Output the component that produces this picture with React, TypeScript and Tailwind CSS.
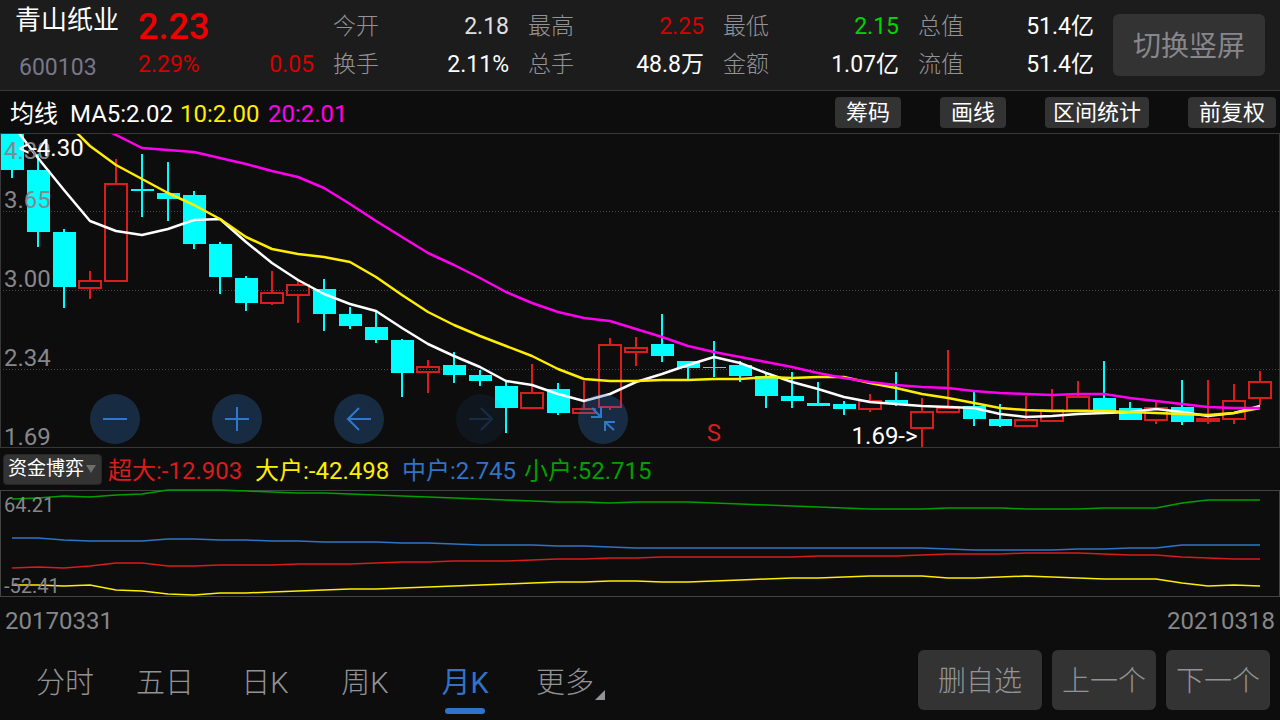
import React, { useState } from 'react';
import clsx from 'clsx';

type Candle = [dir: 'up' | 'down', high: number, top: number, bottom: number, low: number];

interface Quote {
  label: string;
  value: string;
  color: string;
}

const quoteColumns: Quote[][] = [
  [
    { label: '今开', value: '2.18', color: 'text-[#e0e0e0]' },
    { label: '换手', value: '2.11%', color: 'text-white' },
  ],
  [
    { label: '最高', value: '2.25', color: 'text-[#d60000]' },
    { label: '总手', value: '48.8万', color: 'text-white' },
  ],
  [
    { label: '最低', value: '2.15', color: 'text-[#00d400]' },
    { label: '金额', value: '1.07亿', color: 'text-white' },
  ],
  [
    { label: '总值', value: '51.4亿', color: 'text-white' },
    { label: '流值', value: '51.4亿', color: 'text-white' },
  ],
];

const candles: Candle[] = [
  ['down', 133, 134, 170, 178],
  ['down', 154, 170, 232, 247],
  ['down', 229, 232, 287, 308],
  ['up', 271, 280, 289, 299],
  ['up', 159, 183, 282, 282],
  ['down', 154, 189, 191, 217],
  ['down', 162, 193, 199, 221],
  ['down', 191, 195, 244, 249],
  ['down', 242, 244, 277, 294],
  ['down', 276, 278, 303, 311],
  ['up', 271, 292, 304, 305],
  ['up', 281, 284, 296, 323],
  ['down', 279, 289, 314, 331],
  ['down', 307, 314, 326, 329],
  ['down', 311, 327, 340, 343],
  ['down', 339, 340, 373, 397],
  ['up', 360, 366, 373, 393],
  ['down', 352, 365, 375, 383],
  ['down', 370, 375, 381, 386],
  ['down', 382, 386, 408, 433],
  ['up', 364, 392, 409, 409],
  ['down', 383, 389, 413, 415],
  ['up', 381, 408, 414, 414],
  ['up', 338, 344, 408, 410],
  ['up', 337, 347, 353, 366],
  ['down', 314, 344, 356, 362],
  ['down', 361, 361, 368, 379],
  ['down', 341, 367, 368, 377],
  ['down', 361, 365, 376, 382],
  ['down', 374, 376, 396, 408],
  ['down', 372, 396, 401, 408],
  ['down', 382, 403, 406, 406],
  ['down', 401, 404, 409, 415],
  ['up', 394, 400, 410, 412],
  ['down', 372, 400, 404, 406],
  ['up', 398, 411, 429, 447],
  ['up', 350, 407, 413, 413],
  ['down', 391, 406, 419, 426],
  ['down', 404, 419, 426, 427],
  ['up', 396, 419, 427, 427],
  ['up', 389, 409, 422, 422],
  ['up', 381, 396, 411, 411],
  ['down', 361, 398, 411, 411],
  ['down', 402, 408, 420, 420],
  ['up', 402, 407, 421, 424],
  ['down', 380, 407, 422, 425],
  ['up', 380, 418, 422, 424],
  ['up', 384, 400, 420, 424],
  ['up', 371, 381, 399, 405],
];

const ma5 = [
  124, 158, 190, 221, 231, 235, 229, 220, 219, 242, 263, 280, 294, 304, 311, 328, 344, 356, 367, 381, 385, 394, 401,
  394, 382, 374, 365, 357, 363, 373, 382, 389, 397, 402, 404, 406, 407, 408, 414, 417, 416, 414, 413, 412, 409, 412,
  416, 413, 406,
];
const ma10 = [
  70, 95, 120, 146, 165, 179, 193, 205, 219, 237, 249, 254, 257, 262, 277, 295, 312, 325, 336, 346, 356, 369, 379,
  381, 381, 380, 380, 379, 379, 377, 378, 377, 377, 383, 388, 394, 398, 403, 408, 410, 411, 411, 411, 412, 413, 414,
  415, 413, 408,
];
const ma20 = [
  83, 96, 109, 122, 135, 148, 150, 152, 158, 164, 171, 177, 188, 204, 221, 237, 253, 265, 278, 292, 303, 312, 318,
  321, 329, 337, 346, 352, 357, 362, 367, 373, 378, 382, 385, 387, 388, 391, 393, 394, 395, 394, 394, 398, 401, 404,
  407, 408, 408,
];

const small = [
  499, 498, 496, 497, 495, 494, 490, 490, 490, 491, 492, 493, 493, 494, 495, 496, 497, 498, 499, 500, 501, 502, 502,
  503, 502, 502, 502, 503, 504, 505, 506, 507, 508, 509, 509, 509, 508, 508, 508, 509, 509, 509, 508, 508, 508, 503,
  500, 500, 500,
];
const middle = [
  538, 538, 540, 541, 541, 541, 539, 539, 540, 540, 541, 541, 542, 542, 542, 543, 543, 544, 545, 545, 545, 546, 546,
  547, 548, 548, 548, 548, 548, 548, 548, 548, 548, 548, 548, 548, 549, 550, 550, 550, 550, 549, 549, 548, 548, 545,
  545, 545, 545,
];
const huge = [
  568, 567, 568, 566, 563, 563, 566, 566, 565, 565, 565, 564, 564, 564, 563, 562, 562, 561, 561, 561, 560, 559, 559,
  558, 558, 557, 557, 557, 557, 557, 557, 556, 556, 556, 556, 555, 554, 554, 554, 553, 553, 553, 554, 555, 555, 557,
  558, 559, 559,
];
const large = [
  585, 585, 586, 585, 590, 591, 594, 595, 593, 593, 592, 591, 590, 589, 589, 588, 587, 586, 585, 584, 583, 582, 582,
  581, 581, 582, 582, 581, 580, 579, 578, 578, 577, 576, 576, 576, 578, 578, 577, 576, 577, 578, 579, 579, 579, 583,
  586, 585, 586,
];

const tabs = ['分时', '五日', '日K', '周K', '月K', '更多'];

const xOf = (index: number) => 12 + index * 26;
const toPoints = (values: number[]) => values.map((y, i) => `${xOf(i)},${y}`).join(' ');

const Header = () => (
  <header className="flex h-[91px] items-start gap-[19px] border-b border-[#383838] bg-[#1c1c1c] pr-[15px] pl-[15px]">
    <div className="flex w-[104px] shrink-0 flex-col gap-[18px] pt-[5px]">
      <h1 className="text-[26px] leading-[30px] whitespace-nowrap text-white">青山纸业</h1>
      <span className="pl-1 text-[23px] leading-[30px] text-[#77778a]">600103</span>
    </div>
    <div className="flex-1 pt-2 text-[23px] leading-[38px] text-[#d60000]">
      <p className="text-[36px] leading-[38px] font-medium text-[#f00000]">2.23</p>
      <p className="flex justify-between">
        <span>2.29%</span>
        <span>0.05</span>
      </p>
    </div>
    {quoteColumns.map((column, i) => (
      <dl key={i} className="flex-1 pt-2 text-[23px] leading-[38px] whitespace-nowrap">
        {column.map(({ label, value, color }) => (
          <div key={label} className="flex justify-between">
            <dt className="font-light text-[#939397]">{label}</dt>
            <dd className={color}>{value}</dd>
          </div>
        ))}
      </dl>
    ))}
    <button className="mt-[14px] h-[62px] w-[152px] shrink-0 rounded-md bg-[#333] pt-1 text-[28px] text-[#87878b]">
      切换竖屏
    </button>
  </header>
);

const Averages = () => (
  <div className="flex h-[42px] items-center justify-between pr-1 pl-[10px]">
    <div className="flex pt-[3px] text-2xl whitespace-nowrap">
      <span className="w-[60px] text-white">均线</span>
      <span className="w-[110px] text-white">MA5:2.02</span>
      <span className="w-[88px] text-[#ffee00]">10:2.00</span>
      <span className="text-[#ff00ee]">20:2.01</span>
    </div>
    <div className="flex gap-[39px] text-[22px] whitespace-nowrap text-white">
      <button className="h-[31px] rounded-[4px] bg-[#333] px-[11px] leading-[31px]">筹码</button>
      <button className="h-[31px] rounded-[4px] bg-[#333] px-[11px] leading-[31px]">画线</button>
      <button className="h-[31px] rounded-[4px] bg-[#333] px-2 leading-[31px]">区间统计</button>
      <button className="h-[31px] rounded-[4px] bg-[#333] px-[11px] leading-[31px]">前复权</button>
    </div>
  </div>
);

interface RoundButtonProps {
  label: string;
  disabled?: boolean;
  children: React.ReactNode;
}

const RoundButton: React.FC<RoundButtonProps> = ({ label, disabled, children }) => (
  <button
    aria-label={label}
    disabled={disabled}
    className="size-[50px] rounded-full bg-[#2f74c0]/30 text-[#2f78cc] disabled:opacity-30"
  >
    <svg viewBox="0 0 50 50" className="size-full" fill="none" stroke="currentColor" strokeWidth="2">
      {children}
    </svg>
  </button>
);

const PriceChart = () => (
  <section className="relative h-[315px] border border-[#383838] text-2xl leading-6">
    <svg viewBox="1 134 1278 313" preserveAspectRatio="none" className="size-full" fill="none">
      {[211, 290, 369].map(y => (
        <line key={y} x1="0" x2="1280" y1={y + 0.5} y2={y + 0.5} stroke="#484848" strokeDasharray="1 2" />
      ))}
      <g shapeRendering="crispEdges" strokeWidth="2">
        {candles.map(([dir, high, top, bottom, low], i) => {
          const x = xOf(i);
          if (dir === 'down') {
            return (
              <g key={i}>
                <rect x={x - 1} y={high} width="2" height={low - high} fill="#00ffff" />
                <rect x={x - 11} y={top} width="23" height={bottom - top} fill="#00ffff" />
              </g>
            );
          }
          return (
            <g key={i} stroke="#d91c1c">
              <path d={`M${x} ${high}V${top}M${x} ${bottom}V${low}`} />
              <rect x={x - 11} y={top + 1} width="22" height={bottom - top - 2} />
            </g>
          );
        })}
      </g>
      <g strokeWidth="2.5" strokeLinejoin="round">
        <polyline points={toPoints(ma5)} stroke="#ffffff" />
        <polyline points={toPoints(ma10)} stroke="#ffee00" />
        <polyline points={toPoints(ma20)} stroke="#ff00ee" />
      </g>
    </svg>

    <div className="absolute inset-y-0 left-[3px] text-[#87878b]">
      <span className="absolute top-[5px]">4.30</span>
      <div className="flex flex-col gap-[55px] pt-[54px]">
        <span>3.65</span>
        <span>3.00</span>
        <span>2.34</span>
        <span>1.69</span>
      </div>
    </div>
    <span className="absolute top-[2px] left-[17px] whitespace-nowrap text-white">&lt;-4.30</span>
    <span className="absolute top-[287px] -translate-x-1/2 text-[#d91c1c]" style={{ left: `${(xOf(27) / 1280) * 100}%` }}>
      S
    </span>
    <span
      className="absolute top-[290px] -translate-x-full whitespace-nowrap text-white"
      style={{ left: `${((xOf(35) - 4) / 1280) * 100}%` }}
    >
      1.69-&gt;
    </span>

    <div className="absolute bottom-[3px] left-[89px] flex gap-[72px]">
      <RoundButton label="缩小">
        <path d="M13 25H37" />
      </RoundButton>
      <RoundButton label="放大">
        <path d="M13 25H37M25 13V37" />
      </RoundButton>
      <RoundButton label="左移">
        <path d="M37 25H14M25 14L14 25L25 36" />
      </RoundButton>
      <RoundButton label="右移" disabled>
        <path d="M13 25H36M25 14L36 25L25 36" />
      </RoundButton>
      <RoundButton label="收起">
        <path d="M14 14L23 23M13 23H23V13M36 36L27 28M37 28H27V37" />
      </RoundButton>
    </div>
  </section>
);

const FundChart = () => (
  <section>
    <div className="flex h-[42px] items-center gap-[6px] pl-[3px]">
      <div className="relative">
        <select
          aria-label="指标"
          className="h-[31px] w-[99px] appearance-none rounded-[4px] border border-[#262626] bg-[#333] pl-1 text-[19px] text-white"
        >
          <option>资金博弈</option>
        </select>
        <svg viewBox="0 0 10 8" className="pointer-events-none absolute top-[11px] right-[6px] h-2 w-[10px]">
          <path d="M0 0H10L5 8Z" fill="#6e6e6e" />
        </svg>
      </div>
      <div className="flex pt-[3px] text-2xl whitespace-nowrap">
        <span className="w-[147px] text-[#d91c1c]">超大:-12.903</span>
        <span className="w-[147px] text-[#ffee00]">大户:-42.498</span>
        <span className="w-[122px] text-[#2f74c8]">中户:2.745</span>
        <span className="text-[#00a000]">小户:52.715</span>
      </div>
    </div>
    <div className="relative h-[107px] border border-[#444] text-xl leading-5 text-[#87878b]">
      <svg
        viewBox="1 491 1278 105"
        preserveAspectRatio="none"
        className="size-full overflow-visible"
        fill="none"
        strokeWidth="1.5"
      >
        <polyline points={toPoints(small)} stroke="#00a000" />
        <polyline points={toPoints(middle)} stroke="#2f74c8" />
        <polyline points={toPoints(huge)} stroke="#d91c1c" />
        <polyline points={toPoints(large)} stroke="#ffee00" />
      </svg>
      <span className="absolute top-1 left-[3px]">64.21</span>
      <span className="absolute bottom-0 left-[3px]">-52.41</span>
    </div>
    <div className="flex h-[46px] items-center justify-between px-[5px] pt-[2px] text-2xl text-[#87878b]">
      <time dateTime="2017-03-31">20170331</time>
      <time dateTime="2021-03-18">20210318</time>
    </div>
  </section>
);

const Footer = () => {
  const [active, setActive] = useState('月K');

  return (
    <footer className="flex items-start justify-between pt-[7px] pr-[10px] pl-[15px] font-light text-[#939397]">
      <nav className="flex text-[29px]">
        {tabs.map(tab => (
          <button
            key={tab}
            onClick={() => setActive(tab)}
            className={clsx('relative h-[64px] w-[100px] pt-1', active === tab && 'font-normal text-[#2f74c8]')}
          >
            {tab}
            {active === tab && (
              <span className="absolute bottom-0 left-[30px] h-[6px] w-10 rounded-full bg-[#2f74c8]" />
            )}
            {tab === '更多' && (
              <svg viewBox="0 0 10 10" className="absolute right-[10px] bottom-[14px] size-[10px]">
                <path d="M10 0V10H0Z" fill="#939397" />
              </svg>
            )}
          </button>
        ))}
      </nav>
      <div className="flex gap-[10px] text-[28px]">
        <button className="h-[60px] w-[124px] rounded-md bg-[#333] pt-1">删自选</button>
        <button className="h-[60px] w-[104px] rounded-md bg-[#333] pt-1">上一个</button>
        <button className="h-[60px] w-[104px] rounded-md bg-[#333] pt-1">下一个</button>
      </div>
    </footer>
  );
};

export default function App() {
  return (
    <main className="min-h-screen bg-[#0d0d0d] font-['Roboto','Noto_Sans_CJK_SC',sans-serif]">
      <Header />
      <Averages />
      <PriceChart />
      <FundChart />
      <Footer />
    </main>
  );
}
